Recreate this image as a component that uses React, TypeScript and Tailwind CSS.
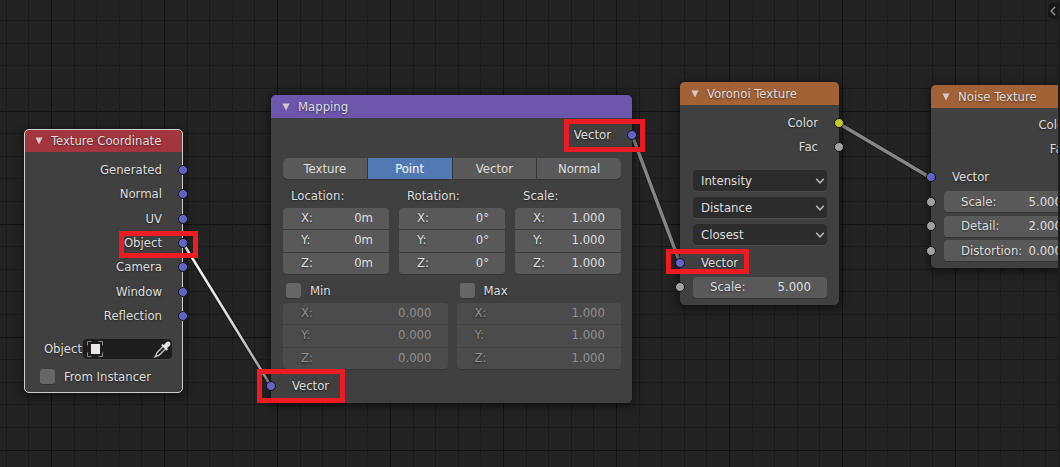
import { useState, type ReactNode } from "react";

type SocketKind = "vector" | "color" | "value";

const GRID = 22.6;

function Grid() {
  const lines = Array.from({ length: 140 }, (_, i) => i - 3);
  return (
    <svg className="absolute inset-0 h-full w-full" aria-hidden="true" shapeRendering="crispEdges">
      {lines.map((i) => (
        <rect key={`h${i}`} x="0" y={Math.floor(20.6 + i * GRID)} width="100%" height="1" fill={(i + 1) % 5 === 0 ? "#131313" : "#1a1a1a"} />
      ))}
      {lines.map((i) => (
        <rect key={`v${i}`} x={Math.floor(6.2 + i * GRID)} y="0" width="1" height="100%" fill={(i + 3) % 5 === 0 ? "#131313" : "#1a1a1a"} />
      ))}
    </svg>
  );
}

function Links() {
  return (
    <svg className="absolute inset-0 h-full w-full" aria-hidden="true" fill="none">
      <defs>
        <linearGradient id="selected" gradientUnits="userSpaceOnUse" x1="182" y1="243" x2="271" y2="386">
          <stop offset="0" stopColor="#ffffff" />
          <stop offset="0.6" stopColor="#d8d8d8" />
          <stop offset="1" stopColor="#8c8c8c" />
        </linearGradient>
      </defs>
      <g stroke="#111111" strokeWidth="5" strokeOpacity="0.6">
        <path d="M183 243L271 386" />
        <path d="M632 135L680 263" />
        <path d="M838 123L931 178" />
      </g>
      <path d="M183 243L271 386" stroke="url(#selected)" strokeWidth="2.6" />
      <g stroke="#868686" strokeWidth="3.4">
        <path d="M632 135L680 263" />
        <path d="M838 123L931 178" />
      </g>
    </svg>
  );
}

const socketColor: Record<SocketKind, string> = {
  vector: "bg-[#6363c7]",
  color: "bg-[#c7c729]",
  value: "bg-[#a1a1a1]",
};

function Socket({ kind, side }: { kind: SocketKind; side: "left" | "right" }) {
  return (
    <span
      className={`absolute top-1/2 size-[10px] -translate-y-1/2 rounded-full border border-[#111111] ${socketColor[kind]} ${
        side === "left" ? "-left-[5px]" : "-right-[5px]"
      }`}
    />
  );
}

function Output({ name, kind }: { name: string; kind: SocketKind }) {
  return (
    <div className="relative flex min-h-6 items-center justify-end pr-[21px]">
      {name}
      <Socket kind={kind} side="right" />
    </div>
  );
}

function Input({ name, kind, children }: { name?: string; kind: SocketKind; children?: ReactNode }) {
  return (
    <div className={`relative flex min-h-6 items-center ${children ? "pl-[13px] pr-3" : "pl-[21px]"}`}>
      <Socket kind={kind} side="left" />
      {children ?? name}
    </div>
  );
}

function Node({ title, place, header, selected, children }: { title: string; place: string; header: string; selected?: boolean; children: ReactNode }) {
  const [open, setOpen] = useState(true);
  return (
    <section
      className={`absolute rounded-[5px] bg-[#424242]/95 shadow-[0_2px_9px_2px_rgba(0,0,0,0.5)] ${
        selected ? "outline outline-1 -outline-offset-1 outline-[#d0d0d0]" : ""
      } ${place}`}
    >
      <h2 className={`flex h-[23px] items-center gap-2 rounded-t-[5px] pl-[11px] pt-px ${header}`}>
        <button type="button" aria-label={`Collapse ${title}`} aria-expanded={open} onClick={() => setOpen(!open)}>
          <svg viewBox="0 0 8 8" className="size-2" fill="#d6c8c8">
            <path d="M0.5 0.5H7.5L4 7.5Z" />
          </svg>
        </button>
        <span className="whitespace-nowrap">{title}</span>
      </h2>
      {open && children}
    </section>
  );
}

function NumberField({ name, value, className }: { name: string; value: string; className: string }) {
  return (
    <label className={`flex min-h-0 min-w-0 flex-1 items-center ${className}`}>
      <span>{name}</span>
      <input defaultValue={value} className="w-0 min-w-0 flex-1 bg-transparent text-right outline-none" />
    </label>
  );
}

function Vec({ values, muted }: { values: [string, string, string]; muted?: boolean }) {
  return (
    <div
      className={`flex h-[66px] flex-col gap-px overflow-hidden rounded-[4px] shadow-[0_1px_0_#353535] ${
        muted ? "bg-[#414141] text-[#8f8f8f]" : "bg-[#3b3b3b]"
      }`}
    >
      {["X:", "Y:", "Z:"].map((axis, i) => (
        <NumberField key={axis} name={axis} value={values[i]} className={`pb-px pl-[18px] pr-4 ${muted ? "bg-[#4b4b4b]" : "bg-[#595959]"}`} />
      ))}
    </div>
  );
}

function Check({ name }: { name: string }) {
  return (
    <label className="flex h-[15px] items-center gap-[9px]">
      <input type="checkbox" className="size-[15px] appearance-none rounded-[3px] bg-[#666666] shadow-[0_1px_0_#353535] checked:bg-[#5680c2]" />
      {name}
    </label>
  );
}

function Choice({ label, options }: { label: string; options: string[] }) {
  return (
    <div className="relative">
      <select aria-label={label} className="h-[21px] w-full appearance-none rounded-[4px] bg-[#2c2c2c] pl-2 pr-6 shadow-[0_1px_0_#4a4a4a] outline-none">
        {options.map((o) => (
          <option key={o}>{o}</option>
        ))}
      </select>
      <svg viewBox="0 0 10 6" className="pointer-events-none absolute right-[2px] top-2 h-[6px] w-[10px]" fill="none" stroke="#b8b8b8" strokeWidth="1.5">
        <path d="M1.2 0.8L5 4.8L8.8 0.8" />
      </svg>
    </div>
  );
}

function Slider({ name, value }: { name: string; value: string }) {
  return <NumberField name={name} value={value} className="h-[21px] rounded-[4px] bg-[#595959] pl-[17px] pr-4 shadow-[0_1px_0_#353535]" />;
}

function Modes() {
  const [mode, setMode] = useState("Point");
  return (
    <div className="grid h-[21px] grid-cols-4 gap-px overflow-hidden rounded-[5px] bg-[#383838] shadow-[0_1px_0_#353535]">
      {["Texture", "Point", "Vector", "Normal"].map((m) => (
        <button key={m} type="button" aria-pressed={m === mode} onClick={() => setMode(m)} className={m === mode ? "bg-[#5379b5] text-white" : "bg-[#595959]"}>
          {m}
        </button>
      ))}
    </div>
  );
}

function ObjectPicker() {
  return (
    <div className="flex items-center justify-end pr-[11px]">
      <label htmlFor="object">Object</label>
      <div className="relative ml-px w-[89px]">
        <input id="object" className="h-5 w-full rounded-[4px] bg-[#1d1d1d] px-6 shadow-[0_1px_0_#4a4a4a] outline-none" />
        <svg viewBox="0 0 16 16" className="pointer-events-none absolute left-1 top-[2px] size-4" fill="none" stroke="#8a8a8a">
          <path d="M0.5 4.5V0.5H4.5M11.5 0.5H15.5V4.5M15.5 11.5V15.5H11.5M4.5 15.5H0.5V11.5" />
          <rect x="4" y="3" width="9" height="10" fill="#e8e8e8" stroke="none" />
        </svg>
        <button type="button" aria-label="Pick object" className="absolute right-px top-[2px]">
          <svg viewBox="0 0 17 17" className="size-[17px]" fill="none">
            <path d="M9 5.6L3.2 11.4Q2.6 12.2 2.4 13.4L1.2 15.8L3.8 14.7Q5 14.4 5.6 13.8L11.5 8" stroke="#c0c0c0" strokeWidth="1.4" />
            <path d="M7.2 4.2L8.6 3.1L9.9 3.9L12.2 1.4Q13.9 -0.2 15.7 1.2Q17.2 3 15.6 4.8L13.1 7.1L13.9 8.4L12.8 9.8Z" fill="#e8e8e8" />
          </svg>
        </button>
      </div>
    </div>
  );
}

function Highlight({ place }: { place: string }) {
  return <div className={`pointer-events-none absolute border-[5px] border-[#ed1c24] ${place}`} />;
}

export default function App() {
  return (
    <main className="min-h-screen bg-[#1d1d1d] pr-[2px] font-['DejaVu_Sans_Condensed','DejaVu_Sans',sans-serif] text-[13px] leading-4 text-[#dedede] [text-shadow:0_1px_2px_rgba(0,0,0,0.5)]">
      <div className="relative min-h-screen overflow-hidden bg-[#232323]">
        <Grid />
        <Links />

        <Node title="Texture Coordinate" place="left-6 top-[129px] w-[159px]" header="bg-[#a3353f]" selected>
          <div className="mt-[6px] grid h-[170px] auto-rows-fr">
            {["Generated", "Normal", "UV", "Object", "Camera", "Window", "Reflection"].map((n) => (
              <Output key={n} name={n} kind="vector" />
            ))}
          </div>
          <div className="flex flex-col gap-[10px] pb-[9px] pt-[11px]">
            <ObjectPicker />
            <div className="pl-4">
              <Check name="From Instancer" />
            </div>
          </div>
        </Node>

        <Node title="Mapping" place="left-[271px] top-[95px] w-[361px]" header="bg-[#6d57ad]">
          <div className="pt-[5px]">
            <Output name="Vector" kind="vector" />
          </div>
          <div className="pl-3 pr-[11px] pt-[11px]">
            <Modes />
            <div className="grid grid-cols-3 gap-[10px] pt-[9px]">
              {(
                [
                  ["Location:", ["0m", "0m", "0m"]],
                  ["Rotation:", ["0°", "0°", "0°"]],
                  ["Scale:", ["1.000", "1.000", "1.000"]],
                ] as [string, [string, string, string]][]
              ).map(([name, values]) => (
                <div key={name}>
                  <h3 className="mb-1 pl-2">{name}</h3>
                  <Vec values={values} />
                </div>
              ))}
            </div>
            <div className="grid grid-cols-2 gap-[9px] pt-[9px]">
              <div>
                <div className="mb-[5px] pl-[3px]">
                  <Check name="Min" />
                </div>
                <Vec values={["0.000", "0.000", "0.000"]} muted />
              </div>
              <div>
                <div className="mb-[5px] pl-[3px]">
                  <Check name="Max" />
                </div>
                <Vec values={["1.000", "1.000", "1.000"]} muted />
              </div>
            </div>
          </div>
          <div className="pb-[5px] pt-[5px]">
            <Input name="Vector" kind="vector" />
          </div>
        </Node>

        <Node title="Voronoi Texture" place="left-[680px] top-[82px] w-[159px]" header="bg-[#a36136]">
          <div className="pt-[6px]">
            <Output name="Color" kind="color" />
            <Output name="Fac" kind="value" />
          </div>
          <div className="flex flex-col gap-[6px] pl-[13px] pr-3 pt-[11px]">
            <Choice label="Coloring" options={["Intensity", "Cells"]} />
            <Choice label="Metric" options={["Distance", "Manhattan", "Chebychev", "Minkowski"]} />
            <Choice label="Feature" options={["Closest", "2nd Closest", "3rd Closest", "4th Closest", "Crackle"]} />
          </div>
          <div className="pb-[6px] pt-[6px]">
            <Input name="Vector" kind="vector" />
            <Input kind="value">
              <Slider name="Scale:" value="5.000" />
            </Input>
          </div>
        </Node>

        <Node title="Noise Texture" place="left-[931px] top-[85px] w-[159px]" header="bg-[#a36136]">
          <div className="pt-[5px]">
            <Output name="Color" kind="color" />
            <Output name="Fac" kind="value" />
          </div>
          <div className="mb-[5px] mt-1 grid h-[98px] auto-rows-fr">
            <Input name="Vector" kind="vector" />
            {[
              ["Scale:", "5.000"],
              ["Detail:", "2.000"],
              ["Distortion:", "0.000"],
            ].map(([name, value]) => (
              <Input key={name} kind="value">
                <Slider name={name} value={value} />
              </Input>
            ))}
          </div>
        </Node>

        <Highlight place="left-[119px] top-[231px] h-[27px] w-[79px]" />
        <Highlight place="left-[564px] top-[119px] h-[33px] w-[81px]" />
        <Highlight place="left-[257px] top-[369px] h-[34px] w-[88px]" />
        <Highlight place="left-[666px] top-[249px] h-[25px] w-[83px]" />

        <button type="button" aria-label="Show sidebar" className="absolute right-0 top-[3px] flex h-4 w-[10px] items-center justify-center rounded-l-[5px] bg-[#161616]">
          <svg viewBox="0 0 6 10" className="h-[10px] w-[6px]" fill="none" stroke="#8a8a8a" strokeWidth="1.5">
            <path d="M5.2 0.8L1.2 5L5.2 9.2" />
          </svg>
        </button>
      </div>
    </main>
  );
}
